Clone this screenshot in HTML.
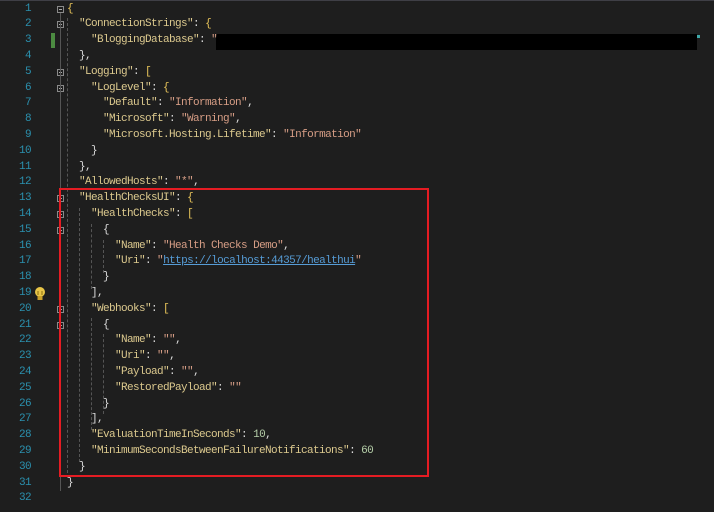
<!DOCTYPE html>
<html><head><style>
body{margin:0;background:#1e1e1e;width:714px;height:512px;overflow:hidden;position:relative;font-family:"Liberation Mono",monospace;font-size:11px}
.top{position:absolute;left:0;top:0;width:714px;height:1px;background:#3f3f46}
.ln{position:absolute;left:0;width:31px;text-align:right;color:#2b91af;line-height:15.8px;letter-spacing:-0.6px}
.c{position:absolute;left:67px;white-space:pre;line-height:15.8px;color:#dcdcdc;letter-spacing:-0.6px}
.k{color:#dcc98e}.s{color:#d69d85}.n{color:#b5cea8}.b{color:#e8c45a}.u{color:#569cd6;text-decoration:underline}
.f{position:absolute;left:57px;width:7px;height:7px;border:1px solid #8a8a8a;box-sizing:border-box}
.f:after{content:"";position:absolute;left:1px;top:2px;width:3px;height:1px;background:#aaa}
.g{position:absolute;border-left:1px dashed #555;width:0}
</style></head><body>
<div class="top"></div>
<div id="nums"></div>
<div style="position:absolute;left:51px;top:33px;width:4px;height:15px;background:#57a64a;opacity:.8"></div>
<div style="position:absolute;left:216px;top:34px;width:481px;height:16px;background:#000"></div>
<div style="position:absolute;left:697px;top:35px;width:3px;height:3px;background:#3fa9a9"></div>
<div style="position:absolute;left:60px;top:13px;width:1px;height:478px;background:#555"></div>
<div class="g" style="left:67px;top:18px;height:460px"></div>
<div class="g" style="left:79px;top:208px;height:254px"></div>
<div class="g" style="left:91px;top:224px;height:65px"></div>
<div class="g" style="left:103px;top:240px;height:33px"></div>
<div class="g" style="left:91px;top:318px;height:112px"></div>
<div class="g" style="left:103px;top:334px;height:80px"></div>
<div style="position:absolute;left:59px;top:188px;width:370px;height:289px;border:2px solid #e51c23;box-sizing:border-box"></div>
<svg style="position:absolute;left:33px;top:286px" width="14" height="16" viewBox="0 0 14 16"><circle cx="7" cy="6" r="5" fill="#e8c547"/><rect x="4.5" y="10" width="5" height="4" fill="#c9a02a"/><path d="M5 5v4M9 5v4" stroke="#8a6d10" stroke-width="1"/></svg>
<div id="code"></div>
<script>
var L=[
'<span class="b">{</span>',
'  <span class="k">"ConnectionStrings"</span>: <span class="b">{</span>',
'    <span class="k">"BloggingDatabase"</span>: <span class="s">"</span>',
'  },',
'  <span class="k">"Logging"</span>: <span class="b">[</span>',
'    <span class="k">"LogLevel"</span>: <span class="b">{</span>',
'      <span class="k">"Default"</span>: <span class="s">"Information"</span>,',
'      <span class="k">"Microsoft"</span>: <span class="s">"Warning"</span>,',
'      <span class="k">"Microsoft.Hosting.Lifetime"</span>: <span class="s">"Information"</span>',
'    }',
'  },',
'  <span class="k">"AllowedHosts"</span>: <span class="s">"*"</span>,',
'  <span class="k">"HealthChecksUI"</span>: <span class="b">{</span>',
'    <span class="k">"HealthChecks"</span>: <span class="b">[</span>',
'      {',
'        <span class="k">"Name"</span>: <span class="s">"Health Checks Demo"</span>,',
'        <span class="k">"Uri"</span>: <span class="s">"<span class="u">https://localhost:44357/healthui</span>"</span>',
'      }',
'    ],',
'    <span class="k">"Webhooks"</span>: <span class="b">[</span>',
'      {',
'        <span class="k">"Name"</span>: <span class="s">""</span>,',
'        <span class="k">"Uri"</span>: <span class="s">""</span>,',
'        <span class="k">"Payload"</span>: <span class="s">""</span>,',
'        <span class="k">"RestoredPayload"</span>: <span class="s">""</span>',
'      }',
'    ],',
'    <span class="k">"EvaluationTimeInSeconds"</span>: <span class="n">10</span>,',
'    <span class="k">"MinimumSecondsBetweenFailureNotifications"</span>: <span class="n">60</span>',
'  }',
'}',
''];
var h='',n='',f=[1,2,5,6,13,14,15,20,21];
for(var i=0;i<32;i++){var t=1.5+i*15.8;
h+='<div class="c" style="top:'+t+'px">'+L[i]+'</div>';
n+='<div class="ln" style="top:'+t+'px">'+(i+1)+'</div>';
if(f.indexOf(i+1)>=0)n+='<div class="f" style="top:'+(t+4)+'px"></div>';}
document.getElementById('code').innerHTML=h;document.getElementById('nums').innerHTML=n;
</script>
</body></html>
